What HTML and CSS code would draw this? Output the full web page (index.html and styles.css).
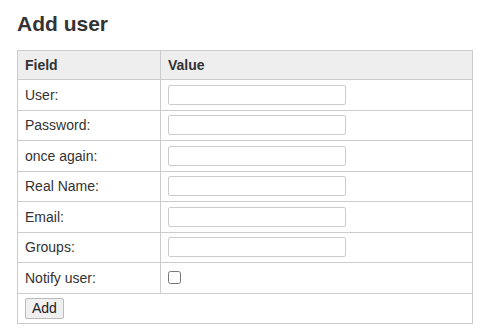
FILE: index.html
```html
<!DOCTYPE html>
<html lang="en">
<head>
  <meta charset="UTF-8">
  <title>Add user</title>
  <meta name="viewport" content="width=device-width, initial-scale=1.0">
  <link rel="stylesheet" href="styles.css">
</head>
<body>

  <h1>Add user</h1>

  <form action="/adduser" method="POST">
    <table class="edit">
      <thead>
        <tr>
          <th class="col-field">Field</th>
          <th>Value</th>
        </tr>
      </thead>
      <tbody>
        <tr>
          <td>User:</td>
          <td><input type="text" name="user"></td>
        </tr>
        <tr>
          <td>Password:</td>
          <td><input type="password" name="pass"></td>
        </tr>
        <tr>
          <td>once again:</td>
          <td><input type="password" name="passchk"></td>
        </tr>
        <tr>
          <td>Real Name:</td>
          <td><input type="text" name="name"></td>
        </tr>
        <tr>
          <td>Email:</td>
          <td><input type="text" name="mail"></td>
        </tr>
        <tr>
          <td>Groups:</td>
          <td><input type="text" name="grps"></td>
        </tr>
        <tr>
          <td>Notify user:</td>
          <td><input type="checkbox" name="notify" class="check"></td>
        </tr>
        <tr>
          <td colspan="2"><button type="submit">Add</button></td>
        </tr>
      </tbody>
    </table>
  </form>

</body>
</html>
```

FILE: styles.css
```css
body {
  font-family: "Liberation Sans", Arial, sans-serif;
  font-size: 14px;
  color: #333;
  margin: 0;
  padding: 0 14px 0 17px;
}
h1 {
  font-size: 21px;
  font-weight: bold;
  margin: 11px 0 13px;
  line-height: 26px;
}
form {
  margin: 0;
}
table.edit {
  border-collapse: collapse;
  width: 456px;
}
th, td {
  border: 1px solid #ccc;
  text-align: left;
  padding: 0 7px;
  height: 29.5px;
  vertical-align: middle;
}
th {
  background: #eee;
  font-weight: bold;
  height: 28px;
}
.col-field {
  width: 128px;
}
input[type="text"], input[type="password"] {
  width: 178px;
  height: 20px;
  box-sizing: border-box;
  border: 1px solid #ccc;
  border-radius: 2px;
  padding: 1px 4px;
  margin: 0;
  display: block;
  font: inherit;
}
.check {
  margin: 0;
  width: 13px;
  height: 13px;
  display: block;
}
button {
  font: inherit;
  color: #222;
  padding: 0 6px;
  height: 21px;
  line-height: 17px;
  background: #f0f0f0;
  border: 1px solid #bbb;
  border-radius: 2px;
  display: block;
}
```
